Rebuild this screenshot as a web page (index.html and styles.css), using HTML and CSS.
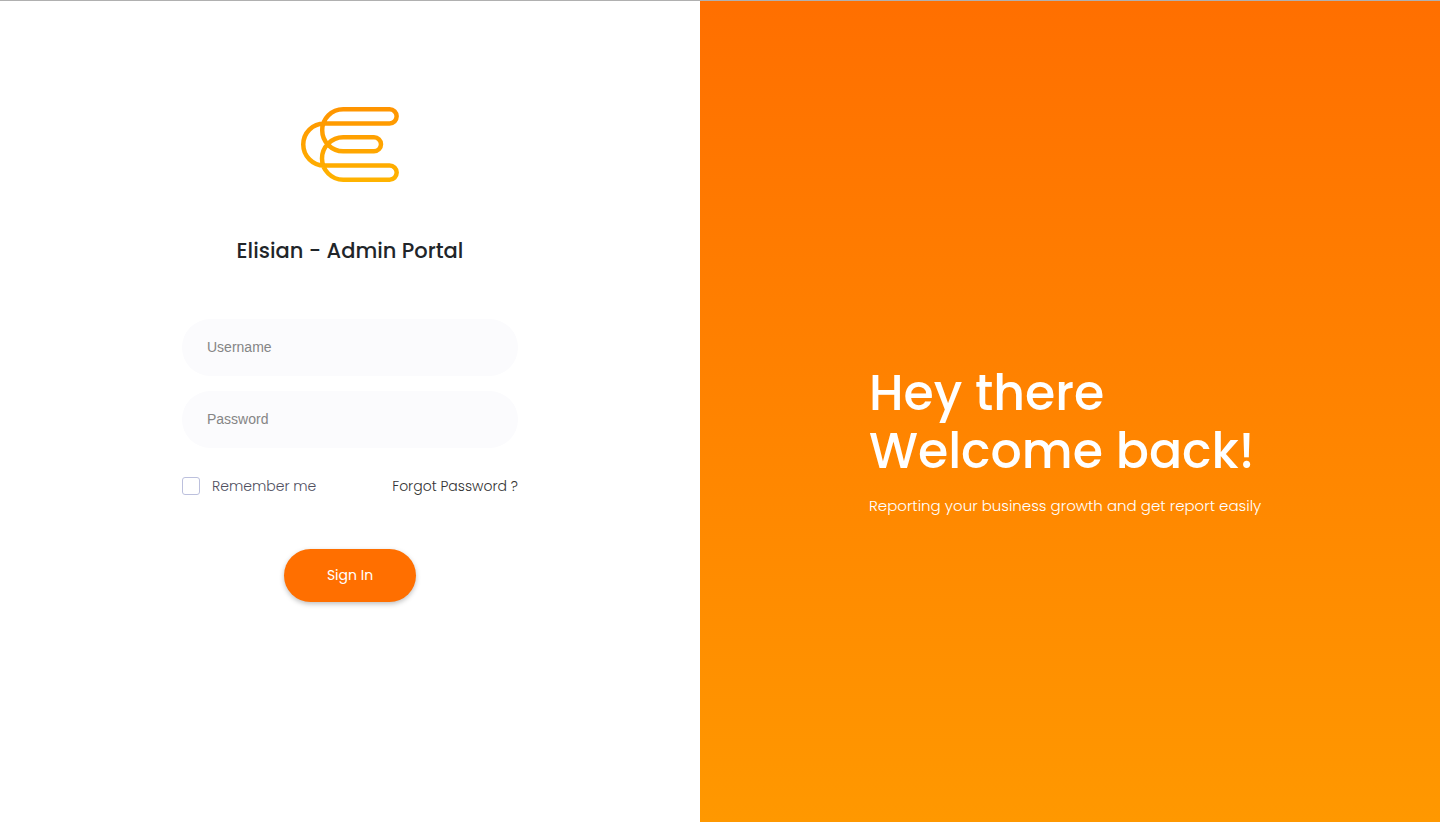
FILE: index.html
```html
<!DOCTYPE html>
<html lang="en">
<head>
<meta charset="utf-8">
<meta name="viewport" content="width=device-width, initial-scale=1">
<title>Elisian - Admin Portal</title>
<link rel="stylesheet" href="styles.css">
</head>
<body>
<div class="page">
  <main class="login">
    <svg class="logo" viewBox="0 0 98 75" role="img" aria-label="Elisian">
      <defs>
        <linearGradient id="brand" gradientUnits="userSpaceOnUse" x1="0" y1="0" x2="0" y2="75">
          <stop offset="0" stop-color="#ff9400"/>
          <stop offset="1" stop-color="#ffb300"/>
        </linearGradient>
      </defs>
      <path d="M88.6 2.3H42.2a21 21 0 0 0 0 42H73a7 7 0 0 0 0-14H42.2a21.2 21.2 0 0 0 0 42.4H88.6a7.1 7.1 0 0 0 0-14.2H23.3a21 21 0 0 1 0-42.1H88.6a7 7 0 0 0 0-14.1Z" fill="none" stroke="url(#brand)" stroke-width="4.5"/>
    </svg>
    <h1 class="title">Elisian - Admin Portal</h1>
    <form class="form">
      <input class="field" type="text" placeholder="Username" aria-label="Username">
      <input class="field" type="password" placeholder="Password" aria-label="Password">
      <div class="options">
        <label class="remember"><input class="check" type="checkbox">Remember me</label>
        <a class="forgot" href="#">Forgot Password ?</a>
      </div>
      <button class="submit" type="submit">Sign In</button>
    </form>
  </main>
  <aside class="welcome">
    <div class="message">
      <h2 class="greeting">Hey there<br>Welcome back!</h2>
      <p class="tagline">Reporting your business growth and get report easily</p>
    </div>
  </aside>
</div>
</body>
</html>
```
FILE: styles.css
```css
* {
  box-sizing: border-box;
}

body {
  margin: 0;
  font-family: Poppins, Inter, sans-serif;
  font-size: 14px;
  color: #212529;
  background: #fff;
}

.page {
  display: grid;
  grid-template-columns: 35fr 37fr;
  min-height: 100vh;
  border-top: 1px solid #b0b0b0;
}

.login {
  display: flex;
  flex-direction: column;
  align-items: center;
  padding: 106px 24px 48px;
}

.logo {
  width: 98px;
  height: 75px;
}

.title {
  margin: 54px 0 0;
  font-size: 21px;
  line-height: 30px;
  font-weight: 500;
}

.form {
  display: flex;
  flex-direction: column;
  align-items: center;
  gap: 15px;
  width: 100%;
  max-width: 336px;
  margin-top: 53px;
}

.field {
  width: 100%;
  height: 57px;
  padding: 0 25px 2px;
  border: 0;
  border-radius: 29px;
  background: #fbfbfd;
  font: 14px "Liberation Sans", Arial, sans-serif;
  color: #212529;
}

.field::placeholder {
  color: #858585;
}

.options {
  display: flex;
  justify-content: space-between;
  align-items: center;
  width: 100%;
  margin-top: 12px;
  line-height: 22px;
  font-weight: 300;
}

.remember {
  display: flex;
  align-items: center;
  gap: 12px;
  color: #50505f;
}

.check {
  appearance: none;
  width: 18px;
  height: 18px;
  margin: 0;
  border: 1px solid #bcc0dd;
  border-radius: 3px;
  background: #fff;
}

.check:checked {
  background: #ff6f00;
}

.forgot {
  color: #333;
  text-decoration: none;
}

.submit {
  width: 132px;
  height: 53px;
  margin-top: 37px;
  border: 0;
  border-radius: 27px;
  background: #ff6f00;
  box-shadow: 0 2px 5px rgba(0, 0, 0, 0.25);
  font: inherit;
  color: #fff;
}

.welcome {
  display: flex;
  align-items: center;
  justify-content: center;
  padding: 58px 24px 0;
  background: linear-gradient(#ff6f00, #ff9800);
  color: #fff;
}

.message {
  width: 100%;
  max-width: 402px;
}

.greeting {
  margin: 0;
  font-size: 49px;
  line-height: 58px;
  font-weight: 500;
}

.tagline {
  margin: 14px 0 0;
  font-size: 15px;
  line-height: 24px;
  font-weight: 300;
}
```
